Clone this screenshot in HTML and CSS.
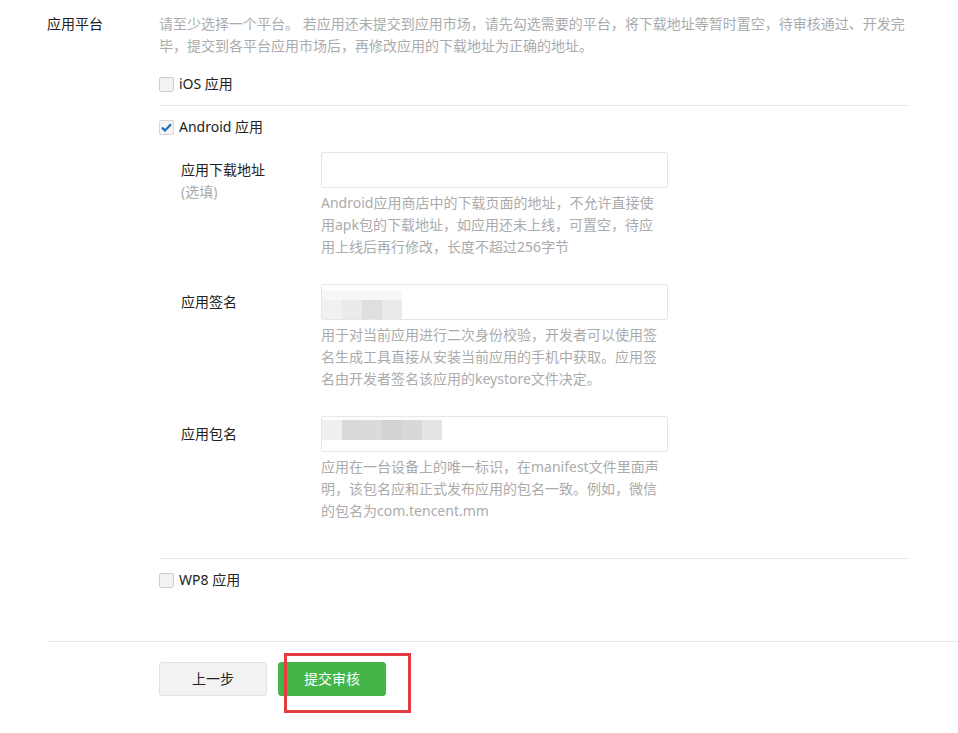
FILE: index.html
```html
<!DOCTYPE html>
<html lang="zh-CN">
<head>
<meta charset="utf-8">
<title>应用平台</title>
<link rel="stylesheet" href="styles.css">
</head>
<body>
<div class="page">
  <div class="row">
    <div class="row-label">应用平台</div>
    <div class="row-body">
      <p class="desc">请至少选择一个平台。 若应用还未提交到应用市场，请先勾选需要的平台，将下载地址等暂时置空，待审核通过、开发完毕，提交到各平台应用市场后，再修改应用的下载地址为正确的地址。</p>

      <div class="platform first">
        <label class="check"><span class="box"></span>iOS 应用</label>
      </div>

      <div class="platform open">
        <label class="check"><span class="box checked"><svg width="11" height="9" viewBox="0 0 11 9"><path d="M1 4.6 L4 7.4 L10 1.2" fill="none" stroke="#1f6fb6" stroke-width="2.2"/></svg></span>Android 应用</label>
        <div class="sub">
          <div class="field">
            <div class="field-label">应用下载地址<span class="opt">(选填)</span></div>
            <div class="field-ctrl">
              <div class="input"></div>
              <p class="help">Android应用商店中的下载页面的地址，不允许直接使用apk包的下载地址，如应用还未上线，可置空，待应用上线后再行修改，长度不超过256字节</p>
            </div>
          </div>
          <div class="field">
            <div class="field-label">应用签名</div>
            <div class="field-ctrl">
              <div class="input">
                <div class="mosaic sig">
                  <div class="mrow"><span class="m s1"></span><span class="m s1"></span><span class="m s1"></span><span class="m s1"></span><span class="m s1"></span><span class="m s1"></span><span class="m s1"></span><span class="m s1"></span></div>
                  <div class="mrow tall"><span class="m s2"></span><span class="m s2"></span><span class="m s3"></span><span class="m s3"></span><span class="m s4"></span><span class="m s4"></span><span class="m s5"></span><span class="m s5"></span></div>
                </div>
              </div>
              <p class="help">用于对当前应用进行二次身份校验，开发者可以使用签名生成工具直接从安装当前应用的手机中获取。应用签名由开发者签名该应用的keystore文件决定。</p>
            </div>
          </div>
          <div class="field">
            <div class="field-label">应用包名</div>
            <div class="field-ctrl">
              <div class="input">
                <div class="mosaic pkg">
                  <div class="mrow tall"><span class="m p1"></span><span class="m p2"></span><span class="m p3"></span><span class="m p4"></span><span class="m p5"></span><span class="m p6"></span></div>
                </div>
              </div>
              <p class="help">应用在一台设备上的唯一标识，在manifest文件里面声明，该包名应和正式发布应用的包名一致。例如，微信的包名为com.tencent.mm</p>
            </div>
          </div>
        </div>
      </div>

      <div class="platform last">
        <label class="check"><span class="box"></span>WP8 应用</label>
      </div>
    </div>
  </div>

  <div class="actions">
    <button class="btn btn-default" type="button">上一步</button>
    <button class="btn btn-primary" type="button">提交审核</button>
    <div class="highlight"></div>
  </div>
</div>
</body>
</html>
```

FILE: styles.css
```css
* { box-sizing: border-box; }

html, body {
  margin: 0;
  padding: 0;
  background: #ffffff;
}

body {
  font-family: "Noto Sans", "Noto Sans CJK SC", sans-serif;
  font-size: 14px;
  line-height: 22px;
  color: #222222;
}

.page {
  width: 958px;
  padding-top: 13px;
}

.row {
  display: flex;
  padding-left: 47px;
}

.row-label {
  width: 112px;
  flex: none;
  color: #222222;
}

.row-body {
  width: 750px;
}

.desc {
  margin: 0;
  color: #ababab;
}

.platform {
  border-bottom: 1px solid #e7e7e7;
}

.platform.first {
  padding: 16px 0 10px;
}

.platform.open {
  padding: 10px 0 36px;
}

.platform.last {
  padding: 10px 0 0;
  border-bottom: none;
  height: 82px;
}

.check {
  display: flex;
  align-items: center;
  height: 22px;
  color: #222222;
}

.box {
  width: 15px;
  height: 15px;
  margin-right: 5px;
  border: 1px solid #cfcfcf;
  border-radius: 2px;
  background: #f2f2f2;
  display: flex;
  align-items: center;
  justify-content: center;
  flex: none;
}

.box.checked {
  background: #f4f4f4;
  border-color: #d6d6d6;
}

.sub {
  margin-top: 14px;
  padding-left: 22px;
  display: flex;
  flex-direction: column;
  gap: 26px;
}

.field {
  display: flex;
}

.field-label {
  width: 140px;
  flex: none;
  padding-top: 7px;
  color: #222222;
  display: flex;
  flex-direction: column;
}

.opt {
  color: #ababab;
}

.field-ctrl {
  width: 347px;
}

.input {
  height: 36px;
  border: 1px solid #e6e6e6;
  border-radius: 2px;
  background: #ffffff;
  position: relative;
  overflow: hidden;
}

.help {
  margin: 4px 0 0;
  width: 338px;
  color: #ababab;
}

.mosaic {
  display: flex;
  flex-direction: column;
}

.mosaic.sig {
  padding-top: 5px;
}

.mosaic.pkg {
  padding-top: 3px;
}

.mrow {
  display: flex;
  height: 10px;
}

.mrow.tall {
  height: 20px;
}

.m {
  width: 10px;
  height: 100%;
}

.pkg .m {
  width: 20px;
}

.s1 { background: #f7f7f7; }
.s2 { background: #f1f1f1; }
.s3 { background: #eaebeb; }
.s4 { background: #dfdfdf; }
.s5 { background: #e9eaeb; }

.p1 { background: #efefef; }
.p2 { background: #d9d9d9; }
.p3 { background: #dadada; }
.p4 { background: #d3d3d3; }
.p5 { background: #d8d8d8; }
.p6 { background: #e4e4e4; }

.actions {
  position: relative;
  margin-left: 47px;
  border-top: 1px solid #e7e7e7;
  padding: 20px 0 37px 112px;
  display: flex;
  gap: 11px;
}

.btn {
  width: 108px;
  height: 34px;
  border-radius: 3px;
  font-family: "Noto Sans", "Noto Sans CJK SC", sans-serif;
  font-size: 14px;
  line-height: 22px;
  padding: 0;
  cursor: pointer;
}

.btn-default {
  background: #f2f2f2;
  border: 1px solid #e3e3e3;
  color: #222222;
}

.btn-primary {
  background: #44b549;
  border: 1px solid #44b549;
  color: #ffffff;
}

.highlight {
  position: absolute;
  left: 237px;
  top: 11px;
  width: 127px;
  height: 60px;
  border: 3px solid #e63b40;
  pointer-events: none;
}
```
